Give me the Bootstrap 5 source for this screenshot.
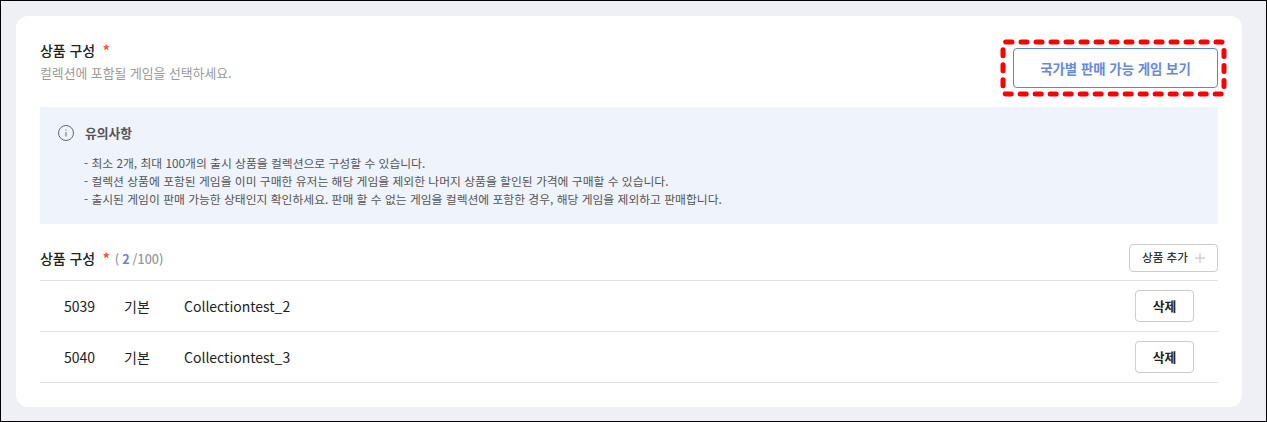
<!doctype html>
<html lang="ko"><head><meta charset="utf-8"><title>상품 구성</title>
<link href="https://cdn.jsdelivr.net/npm/bootstrap@5.3.0/dist/css/bootstrap.min.css" rel="stylesheet">
<style>
html,body{height:100%}
body{font-family:"Noto Sans CJK KR","Noto Sans",sans-serif;background:#eef0f5;color:#222}
.frame-box{height:422px;border:1px solid #000;padding:15px 24px 14px 15px;overflow:hidden}
.panel{background:#fff;border-radius:12px;height:391px;padding:24px 24px 0}
.head-row{height:67px}
.ttl{font-size:14px;font-weight:500;line-height:20px;color:#222;letter-spacing:-.1px}
.req{color:#f4511e;margin-left:4px;font-weight:700}
.sub{font-size:12.85px;line-height:20px;color:#999;margin-top:3px}
.view-wrap{position:relative;margin-top:8px}
.view-btn{width:205px;height:40px;border:1px solid #5f84dc;border-radius:4px;background:#fff;color:#6688dd;font-size:13.4px;font-weight:700;padding:0}
.mark-dash{position:absolute;left:-13px;top:-9px;pointer-events:none;display:block}
.notice{background:#eff3fb;height:117px;padding:16px 17px 0}
.note-ttl{font-size:12.8px;font-weight:700;color:#555;line-height:20px}
.note-ttl span{margin-left:10px}
.note-list{font-size:11.8px;line-height:18px;color:#555;margin:11px 0 0 27px;padding:0;list-style:none}
.list-head{height:57px;padding-top:20px;border-bottom:1px solid #e2e2e2}
.list-ttl{margin-top:4px}
.count{font-size:12.5px;color:#999;margin-left:5px;letter-spacing:0}
.count b{color:#6688dd;font-weight:700;margin:0 3px}
.add-btn{width:89px;height:28px;border:1px solid #ccc;border-radius:4px;background:#fff;font-size:11.6px;font-weight:500;color:#333;padding:0;gap:7px}
.add-btn svg{display:block}
.item-row{height:51px;border-bottom:1px solid #e2e2e2;font-size:14px;color:#222;padding-left:24px;padding-right:24px}
.c-id{width:60px}.c-type{width:60px}
.del-btn{width:59px;height:32px;border:1px solid #ccc;border-radius:4px;background:#fff;font-size:12.8px;font-weight:700;color:#222;padding:0}
</style></head><body>
<div class="frame-box"><div class="panel">
 <div class="d-flex justify-content-between align-items-start head-row">
  <div><div class="ttl">상품 구성 <span class="req">*</span></div><div class="sub">컬렉션에 포함될 게임을 선택하세요.</div></div>
  <div class="view-wrap"><button class="btn view-btn" type="button">국가별 판매 가능 게임 보기</button>
   <svg class="mark-dash" width="228" height="58" viewBox="0 0 228 58" fill="none"><rect x="3" y="3" width="221" height="52" rx="3" stroke="#f00" stroke-width="5" stroke-linecap="round" stroke-dasharray="6 9"/></svg></div>
 </div>
 <div class="notice">
  <div class="d-flex align-items-center note-ttl">
   <svg width="18" height="18" viewBox="0 0 18 18" fill="none" stroke="#666"><circle cx="9" cy="9" r="7.5"/><path d="M9 8v4.5M9 5.5v1"/></svg>
   <span>유의사항</span>
  </div>
  <ul class="note-list">
   <li>- 최소 2개, 최대 100개의 출시 상품을 컬렉션으로 구성할 수 있습니다.</li>
   <li>- 컬렉션 상품에 포함된 게임을 이미 구매한 유저는 해당 게임을 제외한 나머지 상품을 할인된 가격에 구매할 수 있습니다.</li>
   <li>- 출시된 게임이 판매 가능한 상태인지 확인하세요. 판매 할 수 없는 게임을 컬렉션에 포함한 경우, 해당 게임을 제외하고 판매합니다.</li>
  </ul>
 </div>
 <div class="d-flex justify-content-between align-items-start list-head">
  <div class="ttl list-ttl">상품 구성 <span class="req">*</span><span class="count">(<b>2</b>/100)</span></div>
  <button class="btn add-btn d-flex align-items-center justify-content-center" type="button">상품 추가
   <svg width="10" height="10" viewBox="0 0 10 10" stroke="#bbb"><path d="M5 0v10M0 5h10"/></svg></button>
 </div>
 <div class="d-flex align-items-center item-row"><span class="c-id">5039</span><span class="c-type">기본</span><span class="flex-grow-1">Collectiontest_2</span><button class="btn del-btn" type="button">삭제</button></div>
 <div class="d-flex align-items-center item-row"><span class="c-id">5040</span><span class="c-type">기본</span><span class="flex-grow-1">Collectiontest_3</span><button class="btn del-btn" type="button">삭제</button></div>
</div></div>
</body></html>
